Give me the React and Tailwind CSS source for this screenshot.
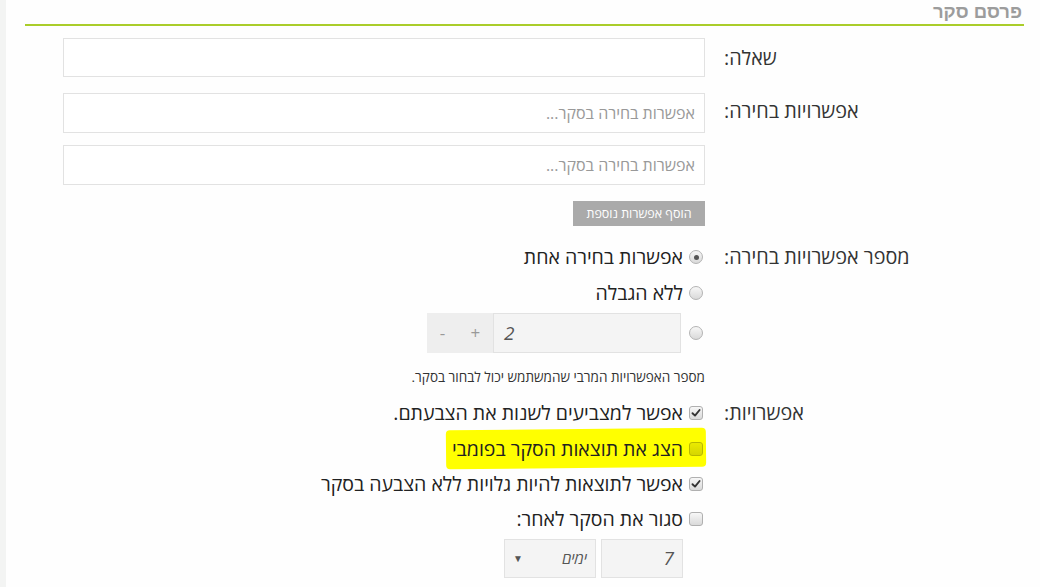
import React from "react";

const font = { fontFamily: '"Open Sans", "Liberation Sans", Arial, sans-serif' };

function Radio({ checked }) {
  return (
    <span className="relative inline-block w-[14px] h-[14px] rounded-full border border-[#b3b3b3] bg-gradient-to-b from-[#f7f7f7] to-[#d9d9d9] shrink-0">
      {checked && <span className="absolute left-[3.5px] top-[3.5px] w-[5px] h-[5px] rounded-full bg-[#555]" />}
    </span>
  );
}

function Check({ checked, yellow }) {
  return (
    <span
      className={
        "relative inline-flex items-center justify-center w-[14px] h-[14px] rounded-[3px] border shrink-0 " +
        (yellow
          ? "border-[#b8b800] bg-gradient-to-b from-[#eaea00] to-[#d6d600]"
          : "border-[#b0b0b0] bg-gradient-to-b from-[#f7f7f7] to-[#dadada]")
      }
    >
      {checked && (
        <svg width="10" height="10" viewBox="0 0 10 10">
          <path d="M1.5 5.2 L4 7.6 L8.6 2" fill="none" stroke="#333" strokeWidth="1.9" strokeLinecap="round" strokeLinejoin="round" />
        </svg>
      )}
    </span>
  );
}

function Label({ children, lh }) {
  return (
    <div className={"w-[300px] shrink-0 text-left text-[19.8px] text-[#333] " + lh}>{children}</div>
  );
}

export default function App() {
  return (
    <div className="flex w-[1040px] h-[587px] bg-[#fefefe] overflow-hidden" style={font}>
      <div className="w-[6px] shrink-0 bg-[#f3f4f3]" />
      <div dir="rtl" className="flex-1 pr-[16px] pl-[19px]">
        <div className="h-[26px] border-b-2 border-[#aacd2a] flex items-start">
          <h1 className="mr-[2px] text-[18.5px] font-bold leading-[24px] text-[#9c9c9c]" style={{ fontFamily: '"Liberation Sans", Arial, sans-serif' }}>
            פרסם סקר
          </h1>
        </div>

        {/* question */}
        <div className="flex gap-[19px] mt-[12px]">
          <Label lh="leading-[39px]">שאלה:</Label>
          <div className="w-[642px]">
            <div className="h-[39px] border border-[#e2e2e2] bg-white" />
          </div>
        </div>

        {/* options */}
        <div className="flex gap-[19px] mt-[16px]">
          <Label lh="leading-[36px]">אפשרויות בחירה:</Label>
          <div className="w-[642px] flex flex-col">
            <div className="h-[40px] border border-[#e2e2e2] bg-white flex items-center pr-[9px] text-[16px] text-[#999]">
              אפשרות בחירה בסקר...
            </div>
            <div className="h-[40px] mt-[12px] border border-[#e2e2e2] bg-white flex items-center pr-[9px] text-[16px] text-[#999]">
              אפשרות בחירה בסקר...
            </div>
            <div className="mt-[16px] flex">
              <button className="h-[25px] w-[132px] bg-[#aaaaaa] text-white text-[12.5px] leading-[25px] text-center">
                הוסף אפשרות נוספת
              </button>
            </div>
          </div>
        </div>

        {/* number of options */}
        <div className="flex gap-[19px] mt-[13px]">
          <Label lh="leading-[36px]">מספר אפשרויות בחירה:</Label>
          <div className="w-[642px] flex flex-col">
            <div className="h-[36px] flex items-center gap-[6px] pr-[2px] text-[19.5px] text-[#222]">
              <Radio checked />
              <span>אפשרות בחירה אחת</span>
            </div>
            <div className="h-[36px] flex items-center gap-[6px] pr-[2px] text-[19.5px] text-[#222]">
              <Radio />
              <span>ללא הגבלה</span>
            </div>
            <div className="h-[40px] mt-[2px] flex items-center gap-[8px] pr-[2px]">
              <Radio />
              <div className="flex h-[40px]">
                <div dir="ltr" className="w-[188px] h-[40px] border border-[#e2e2e2] bg-[#f4f4f4] flex items-center pl-[10px] text-[19px] italic text-[#555]">
                  2
                </div>
                <div className="w-[66px] h-[40px] bg-[#eeeeee] flex items-center justify-around text-[17px] text-[#999]">
                  <span>+</span>
                  <span>-</span>
                </div>
              </div>
            </div>
            <div className="mt-[16px] text-[13.5px] leading-[16px] text-[#333]">
              מספר האפשרויות המרבי שהמשתמש יכול לבחור בסקר.
            </div>
          </div>
        </div>

        {/* settings */}
        <div className="flex gap-[19px] mt-[10px]">
          <Label lh="leading-[36px]">אפשרויות:</Label>
          <div className="w-[642px] flex flex-col">
            <div className="h-[36px] flex items-center gap-[6px] pr-[2px] text-[19.5px] text-[#222]">
              <Check checked />
              <span>אפשר למצביעים לשנות את הצבעתם.</span>
            </div>
            <div className="h-[35px] flex items-center">
              <div className="relative flex items-center gap-[6px] pr-[2px] text-[19.5px] text-[#222]">
                <div className="absolute -right-[1px] -left-[6px] -top-[5px] -bottom-[5px] bg-[#ffff00] rounded-[4px] -rotate-[0.6deg]" />
                <span className="relative"><Check yellow /></span>
                <span className="relative">הצג את תוצאות הסקר בפומבי</span>
              </div>
            </div>
            <div className="h-[35px] flex items-center gap-[6px] pr-[2px] text-[19.5px] text-[#222]">
              <Check checked />
              <span>אפשר לתוצאות להיות גלויות ללא הצבעה בסקר</span>
            </div>
            <div className="h-[35px] flex items-center gap-[6px] pr-[2px] text-[19.5px] text-[#222]">
              <Check />
              <span>סגור את הסקר לאחר:</span>
            </div>
            <div className="flex gap-[5px] mt-[3px] pr-[22px]">
              <div className="w-[82px] h-[39px] border border-[#e2e2e2] bg-[#f4f4f4] flex items-center pr-[8px] text-[19px] italic text-[#555]">
                7
              </div>
              <div className="w-[92px] h-[39px] border border-[#e2e2e2] bg-[#f4f4f4] flex items-center justify-between pr-[8px] pl-[8px] text-[15px] italic text-[#555]">
                <span>ימים</span>
                <span className="not-italic text-[10px] text-[#555]">▼</span>
              </div>
            </div>
          </div>
        </div>
      </div>
    </div>
  );
}
